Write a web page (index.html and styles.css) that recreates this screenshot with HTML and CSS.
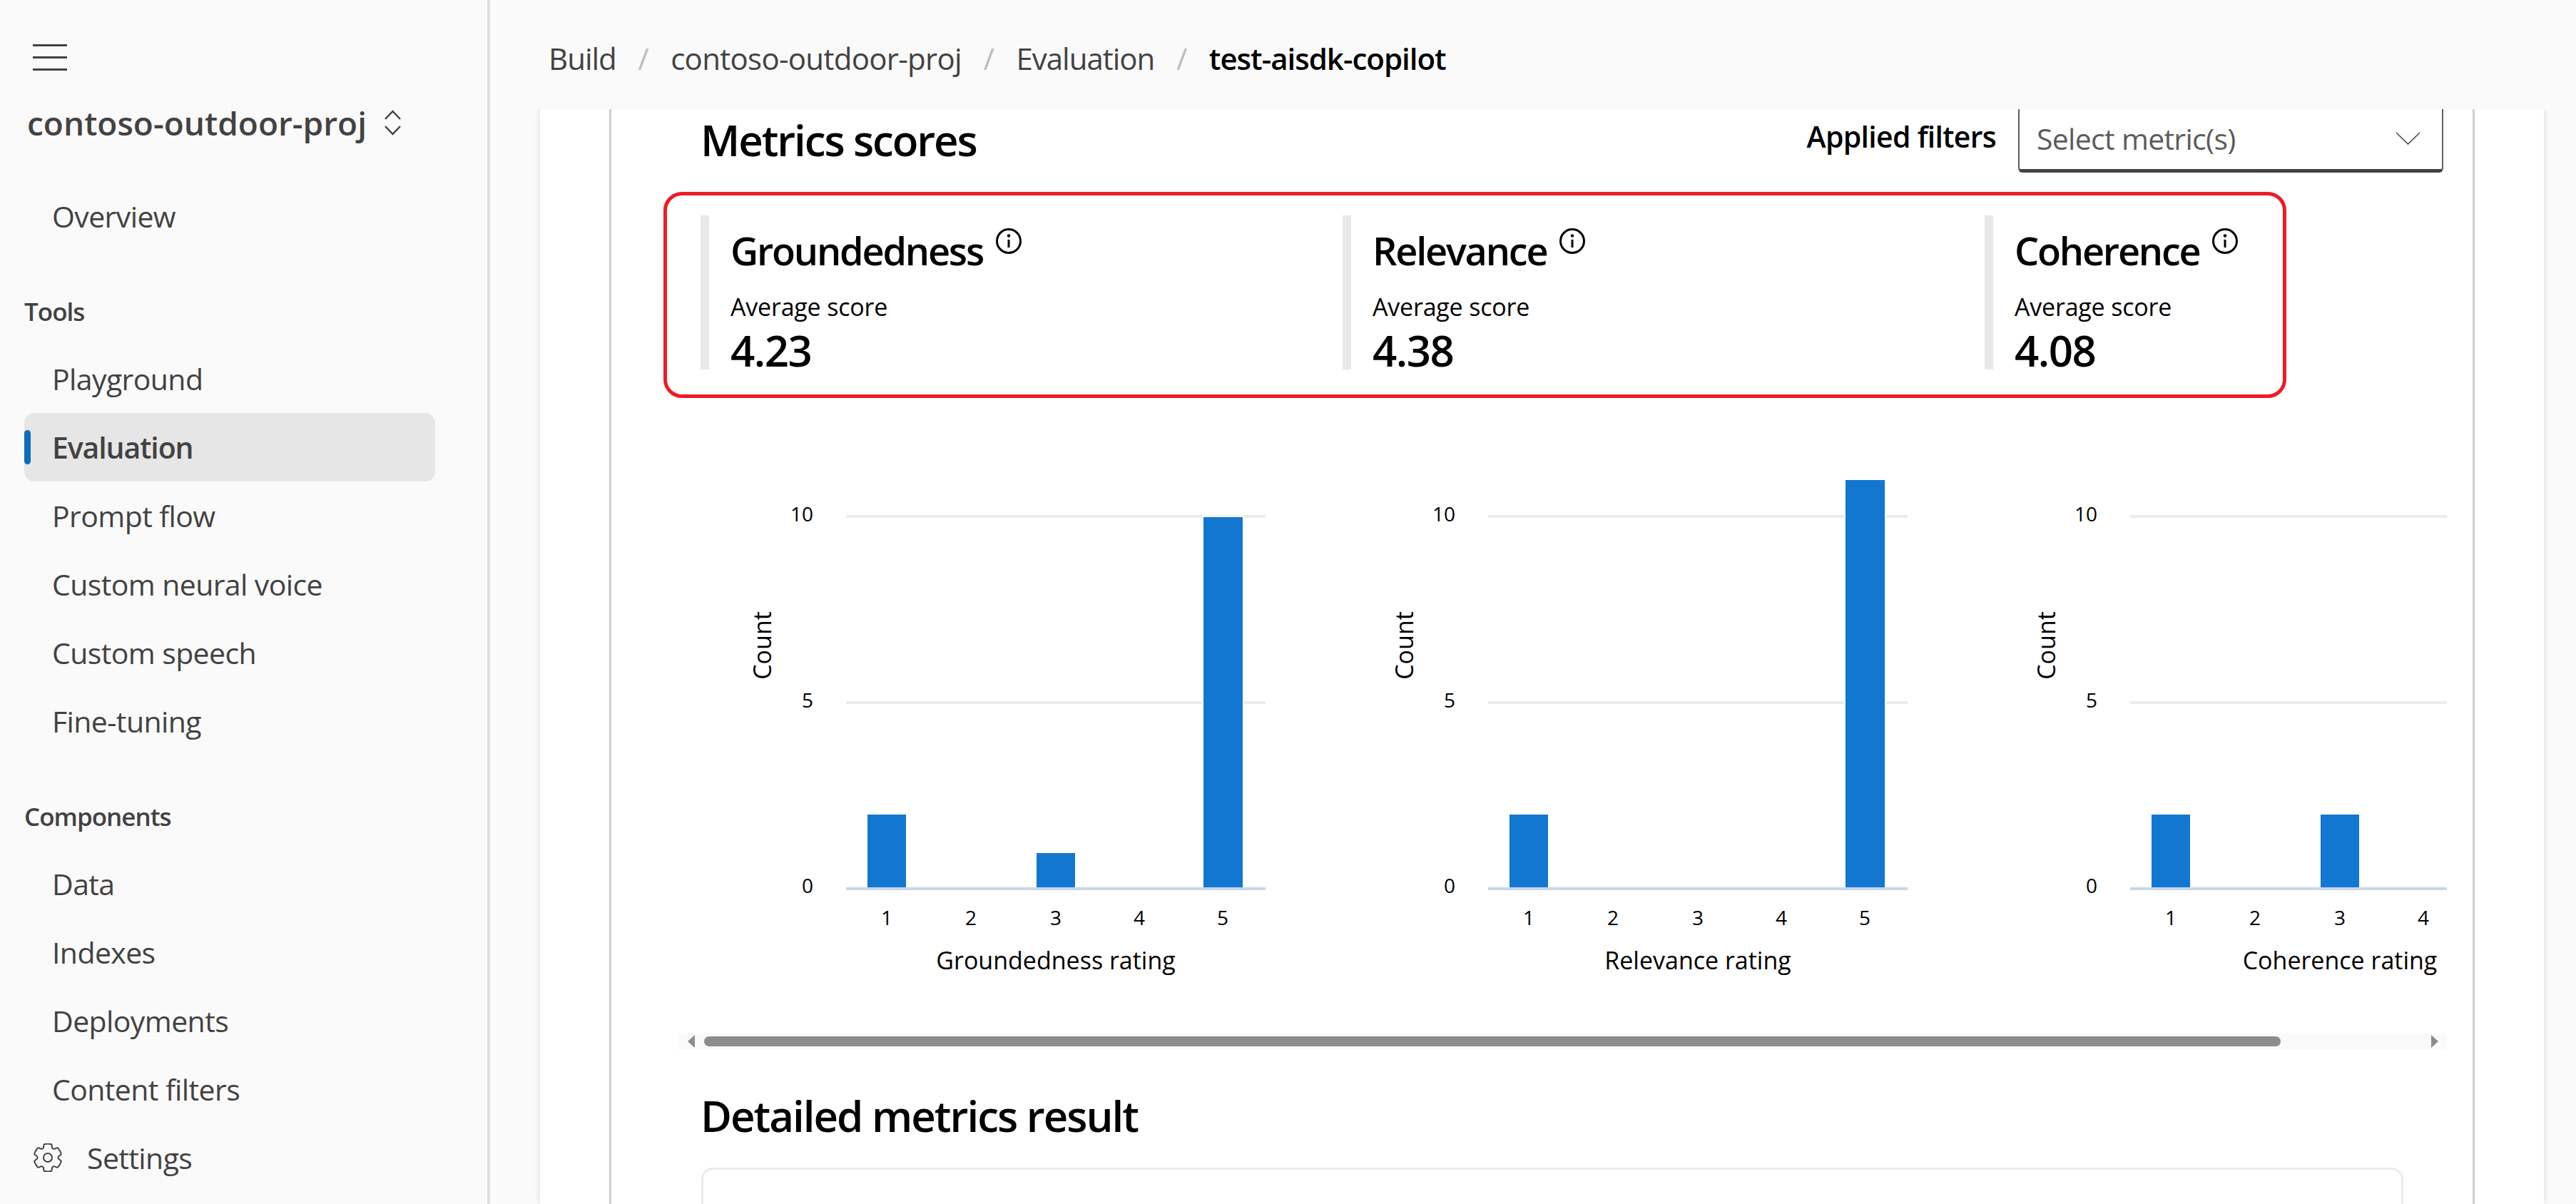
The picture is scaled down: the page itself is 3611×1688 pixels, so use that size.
FILE: index.html
```html
<!DOCTYPE html>
<html lang="en">
<head>
<meta charset="utf-8">
<title>test-aisdk-copilot</title>
<link rel="stylesheet" href="styles.css">
</head>
<body>
<div class="app">
  <aside class="sidebar">
    <div class="burger"><span></span><span></span><span></span></div>
    <div class="project">
      <span class="project-name">contoso-outdoor-proj</span>
      <svg class="updown" viewBox="0 0 25 36"><path d="M2 13 12.5 2 23 13M2 23l10.500 11L23 23"/></svg>
    </div>
    <nav class="nav">
      <a class="item">Overview</a>
      <div class="group">Tools</div>
      <a class="item">Playground</a>
      <a class="item active">Evaluation</a>
      <a class="item">Prompt flow</a>
      <a class="item">Custom neural voice</a>
      <a class="item">Custom speech</a>
      <a class="item">Fine-tuning</a>
      <div class="group">Components</div>
      <a class="item">Data</a>
      <a class="item">Indexes</a>
      <a class="item">Deployments</a>
      <a class="item">Content filters</a>
      <a class="item settings">
        <svg class="gear" viewBox="2 2 20 20"><path d="M12.010 2.250c.74 0 1.470.1 2.180.25.32.07.55.33.59.65l.17 1.530a1.380 1.380 0 0 0 1.920 1.110l1.400-.61c.3-.13.64-.06.85.17a9.800 9.800 0 0 1 2.200 3.800c.1.3 0 .63-.26.82l-1.240.92a1.380 1.380 0 0 0 0 2.220l1.240.92c.26.19.36.52.27.82a9.800 9.800 0 0 1-2.200 3.800.75.75 0 0 1-.85.17l-1.400-.62a1.380 1.380 0 0 0-1.930 1.120l-.17 1.520a.75.75 0 0 1-.58.65 9.520 9.520 0 0 1-4.400 0 .75.75 0 0 1-.57-.65l-.17-1.520a1.380 1.380 0 0 0-1.930-1.110l-1.400.62a.75.75 0 0 1-.85-.18 9.800 9.800 0 0 1-2.200-3.800c-.1-.3 0-.63.27-.82l1.240-.92a1.380 1.380 0 0 0 0-2.220l-1.240-.92a.75.75 0 0 1-.28-.82 9.800 9.800 0 0 1 2.200-3.800c.23-.23.57-.3.86-.17l1.400.62c.83.36 1.780-.19 1.920-1.120l.17-1.520a.75.75 0 0 1 .58-.65c.72-.16 1.450-.24 2.200-.25Z"/><circle cx="12" cy="12" r="3"/></svg>
        <span>Settings</span>
      </a>
    </nav>
  </aside>

  <main class="main">
    <header class="crumbs">
      <span class="crumb c-build">Build</span><span class="sep">/</span>
      <span class="crumb c-proj">contoso-outdoor-proj</span><span class="sep">/</span>
      <span class="crumb c-eval">Evaluation</span><span class="sep">/</span>
      <span class="crumb current">test-aisdk-copilot</span>
    </header>

    <div class="stage">
      <div class="page">
        <div class="panel">
          <div class="top-row">
            <h2 class="h-metrics">Metrics scores</h2>
            <div class="filters">
              <span class="filters-label">Applied filters</span>
              <div class="select">
                <span class="select-text">Select metric(s)</span>
                <svg class="select-chev" viewBox="0 0 35 18"><path d="M1 1l16.500 16L34 1"/></svg>
              </div>
            </div>
          </div>

          <div class="scores">
            <div class="score">
              <div class="score-title"><span class="title-g">Groundedness</span><svg class="info" viewBox="0 0 36 36"><circle cx="18" cy="18" r="16.500"/><circle class="dot" cx="18" cy="10.500" r="2.200"/><path d="M18 16v11"/></svg></div>
              <div class="score-label">Average score</div>
              <div class="score-value">4.23</div>
            </div>
            <div class="score">
              <div class="score-title"><span class="title-r">Relevance</span><svg class="info" viewBox="0 0 36 36"><circle cx="18" cy="18" r="16.500"/><circle class="dot" cx="18" cy="10.500" r="2.200"/><path d="M18 16v11"/></svg></div>
              <div class="score-label">Average score</div>
              <div class="score-value">4.38</div>
            </div>
            <div class="score">
              <div class="score-title"><span class="title-c">Coherence</span><svg class="info" viewBox="0 0 36 36"><circle cx="18" cy="18" r="16.500"/><circle class="dot" cx="18" cy="10.500" r="2.200"/><path d="M18 16v11"/></svg></div>
              <div class="score-label">Average score</div>
              <div class="score-value">4.08</div>
            </div>
          </div>

          <div class="charts">
            <svg class="chart" viewBox="0 0 900 760">
              <rect class="grid" x="235" y="82" width="588" height="4"/>
              <rect class="grid" x="235" y="343" width="588" height="4"/>
              <rect class="bar" x="265" y="502" width="54" height="103"/>
              <rect class="bar" x="502" y="556" width="54" height="49"/>
              <rect class="bar" x="736" y="85" width="55" height="520"/>
              <rect class="axis" x="235" y="604" width="588" height="4"/>
              <text class="tick" x="189" y="91" text-anchor="end">10</text>
              <text class="tick" x="189" y="352" text-anchor="end">5</text>
              <text class="tick" x="189" y="612" text-anchor="end">0</text>
              <text class="tick" x="292" y="657" text-anchor="middle">1</text>
              <text class="tick" x="410" y="657" text-anchor="middle">2</text>
              <text class="tick" x="529" y="657" text-anchor="middle">3</text>
              <text class="tick" x="646" y="657" text-anchor="middle">4</text>
              <text class="tick" x="763" y="657" text-anchor="middle">5</text>
              <text class="axis-title" x="529" y="719" text-anchor="middle">Groundedness rating</text>
              <text class="axis-title" transform="translate(130 265) rotate(-90)" text-anchor="middle">Count</text>
            </svg>
            <svg class="chart" viewBox="0 0 900 760">
              <rect class="grid" x="235" y="82" width="588" height="4"/>
              <rect class="grid" x="235" y="343" width="588" height="4"/>
              <rect class="bar" x="265" y="502" width="54" height="103"/>
              <rect class="bar" x="736" y="33" width="55" height="572"/>
              <rect class="axis" x="235" y="604" width="588" height="4"/>
              <text class="tick" x="189" y="91" text-anchor="end">10</text>
              <text class="tick" x="189" y="352" text-anchor="end">5</text>
              <text class="tick" x="189" y="612" text-anchor="end">0</text>
              <text class="tick" x="292" y="657" text-anchor="middle">1</text>
              <text class="tick" x="410" y="657" text-anchor="middle">2</text>
              <text class="tick" x="529" y="657" text-anchor="middle">3</text>
              <text class="tick" x="646" y="657" text-anchor="middle">4</text>
              <text class="tick" x="763" y="657" text-anchor="middle">5</text>
              <text class="axis-title" x="529" y="719" text-anchor="middle">Relevance rating</text>
              <text class="axis-title" transform="translate(130 265) rotate(-90)" text-anchor="middle">Count</text>
            </svg>
            <svg class="chart" viewBox="0 0 900 760">
              <rect class="grid" x="235" y="82" width="588" height="4"/>
              <rect class="grid" x="235" y="343" width="588" height="4"/>
              <rect class="bar" x="265" y="502" width="54" height="103"/>
              <rect class="bar" x="502" y="502" width="54" height="103"/>
              <rect class="axis" x="235" y="604" width="588" height="4"/>
              <text class="tick" x="189" y="91" text-anchor="end">10</text>
              <text class="tick" x="189" y="352" text-anchor="end">5</text>
              <text class="tick" x="189" y="612" text-anchor="end">0</text>
              <text class="tick" x="292" y="657" text-anchor="middle">1</text>
              <text class="tick" x="410" y="657" text-anchor="middle">2</text>
              <text class="tick" x="529" y="657" text-anchor="middle">3</text>
              <text class="tick" x="646" y="657" text-anchor="middle">4</text>
              <text class="axis-title" x="529" y="719" text-anchor="middle">Coherence rating</text>
              <text class="axis-title" transform="translate(130 265) rotate(-90)" text-anchor="middle">Count</text>
            </svg>
          </div>

          <div class="scrollbar">
            <span class="arrow left"></span>
            <span class="thumb"></span>
            <span class="arrow right"></span>
          </div>

          <h2 class="h-detail">Detailed metrics result</h2>
          <div class="detail-box"></div>
        </div>
      </div>
    </div>
  </main>
</div>
</body>
</html>
```
FILE: styles.css
```css
* { box-sizing: border-box; }
html, body { margin: 0; height: 100%; overflow: hidden; }
body {
  font-family: "Open Sans", "Noto Sans", "Liberation Sans", sans-serif;
  background: #fafafa;
  color: #424242;
}
.app { display: flex; width: 3611px; height: 1688px; }

/* sidebar */
.sidebar {
  width: 687px;
  flex: none;
  background: #fafafa;
  border-right: 4px solid #e0e0e0;
  padding-top: 62px;
}
.burger { display: flex; flex-direction: column; gap: 14px; margin-left: 46px; width: 48px; }
.burger span { display: block; height: 3px; background: #424242; }
.project { display: flex; align-items: center; margin: 48px 0 0 38px; height: 50px; gap: 24px; }
.project-name { font-size: 46px; font-weight: 600; line-height: 50px; }
.updown { width: 25px; height: 36px; fill: none; stroke: #424242; stroke-width: 2.500; }
.nav { display: flex; flex-direction: column; margin-top: 58px; }
.item {
  display: flex; align-items: center; height: 96px;
  margin-left: 34px; width: 576px; padding-left: 39px;
  font-size: 41px; line-height: 96px; letter-spacing: -.6px;
  border-radius: 14px;
  position: relative;
}
.item.active { background: #e6e6e6; font-weight: 600; letter-spacing: -1.100px; }
.item.active::before {
  content: ""; position: absolute; left: 0; top: 24px; width: 9px; height: 48px;
  background: #0f6cbd; border-radius: 5px;
}
.group { margin: 62px 0 22px 34px; font-size: 35px; font-weight: 600; line-height: 48px; letter-spacing: -1px; }
.settings { padding-left: 13px; gap: 35px; }
.gear { width: 40px; height: 40px; fill: none; stroke: #424242; stroke-width: 1; }

/* main */
.main { flex: 1; display: flex; flex-direction: column; min-width: 0; }
.crumbs {
  height: 153px; flex: none; display: flex; align-items: flex-start;
  padding: 53px 0 0 82px; font-size: 42px; line-height: 58px; letter-spacing: -1px;
}
.c-proj { letter-spacing: -.7px; }
.sep { color: #bdbdbd; font-weight: 400; margin: 0 30.500px; letter-spacing: 0; }
.current { color: #000; font-weight: 600; }

.stage { flex: 1; display: flex; min-height: 0; padding-left: 70px; padding-right: 45px; }
.page {
  flex: 1; background: #fff; padding: 0 97px;
  box-shadow: 0 0 8px rgba(0,0,0,.14);
  clip-path: inset(0 -12px 0 -12px);
  overflow: hidden;
}
.panel {
  height: 100%;
  border-left: 3px solid #cfcfcf;
  border-right: 3px solid #cfcfcf;
  color: #000;
}
.top-row { display: flex; justify-content: space-between; height: 89px; padding: 0 41px 0 125px; }
.h-metrics { margin: 2px 0 0; font-size: 60px; font-weight: 600; line-height: 82px; letter-spacing: -2.100px; }
.filters { display: flex; gap: 31px; }
.filters-label { font-size: 41px; font-weight: 600; line-height: 64px; margin-top: 6px; letter-spacing: -.7px; }
.select {
  width: 596px; height: 89px; display: flex; justify-content: space-between;
  padding: 0 30px 0 24px;
  border: 2px solid #616161; border-top: 0; border-bottom: 5px solid #424242;
  border-radius: 0 0 6px 6px;
}
.select-text { color: #5c5c5c; font-size: 41px; line-height: 70px; margin-top: 6px; letter-spacing: -.7px; }
.select-chev { width: 35px; height: 18px; margin-top: 32px; fill: none; stroke: #424242; stroke-width: 1.500; }

.scores {
  display: flex; width: 2275px; height: 289px; margin: 27px 0 0 73px;
  border: 5px solid #ed1c24; border-radius: 26px;
  padding: 28px 0 0 47px; background: #fff;
}
.score {
  flex: none; width: 900px; height: 216px;
  border-left: 12px solid #e8e8e8; padding-left: 30px;
}
.score:last-child { width: 390px; }
.score-title { display: flex; align-items: flex-start; height: 94px; padding-top: 12px; gap: 18px; }
.score-title span { font-size: 54px; font-weight: 600; line-height: 74px; letter-spacing: -2.200px; }
.info { width: 36px; height: 36px; margin-top: 6px; fill: none; stroke: #000; stroke-width: 3; }
.info .dot { fill: #000; stroke: none; }
.score-label { font-size: 34px; line-height: 44px; margin-top: 12px; letter-spacing: -.2px; }
.score-value { font-size: 60px; font-weight: 600; line-height: 68px; margin-top: 5px; letter-spacing: -1.500px; }

/* charts */
.charts { display: flex; overflow: hidden; width: 2479px; height: 760px; margin: 82px 0 0 94px; }
.chart { flex: none; width: 900px; height: 760px; display: block; }
.grid { fill: #ebebeb; }
.axis { fill: #c8d6e8; }
.bar { fill: #1277d0; stroke: #fff; stroke-width: 4; paint-order: stroke; }
.tick { font-size: 28px; fill: #000; }
.axis-title { font-size: 34px; fill: #000; }

.scrollbar {
  display: flex; align-items: center; width: 2479px; height: 23px;
  margin: 48px 0 0 94px; background: #fafafa; padding: 0 12px 0 13px;
}
.thumb { width: 2210px; height: 14px; margin-left: 13px; background: #8c8c8c; border-radius: 7px; }
.arrow { width: 0; height: 0; border-top: 9px solid transparent; border-bottom: 9px solid transparent; }
.arrow.left { border-right: 10px solid #8c8c8c; }
.arrow.right { border-left: 10px solid #8c8c8c; margin-left: auto; }

.h-detail { margin: 52px 0 0 125px; font-size: 60px; font-weight: 600; line-height: 82px; letter-spacing: -2px; }
.detail-box {
  width: 2386px; height: 300px; margin: 32px 0 0 126px;
  border: 3px solid #ebebeb; border-radius: 16px;
}
```
